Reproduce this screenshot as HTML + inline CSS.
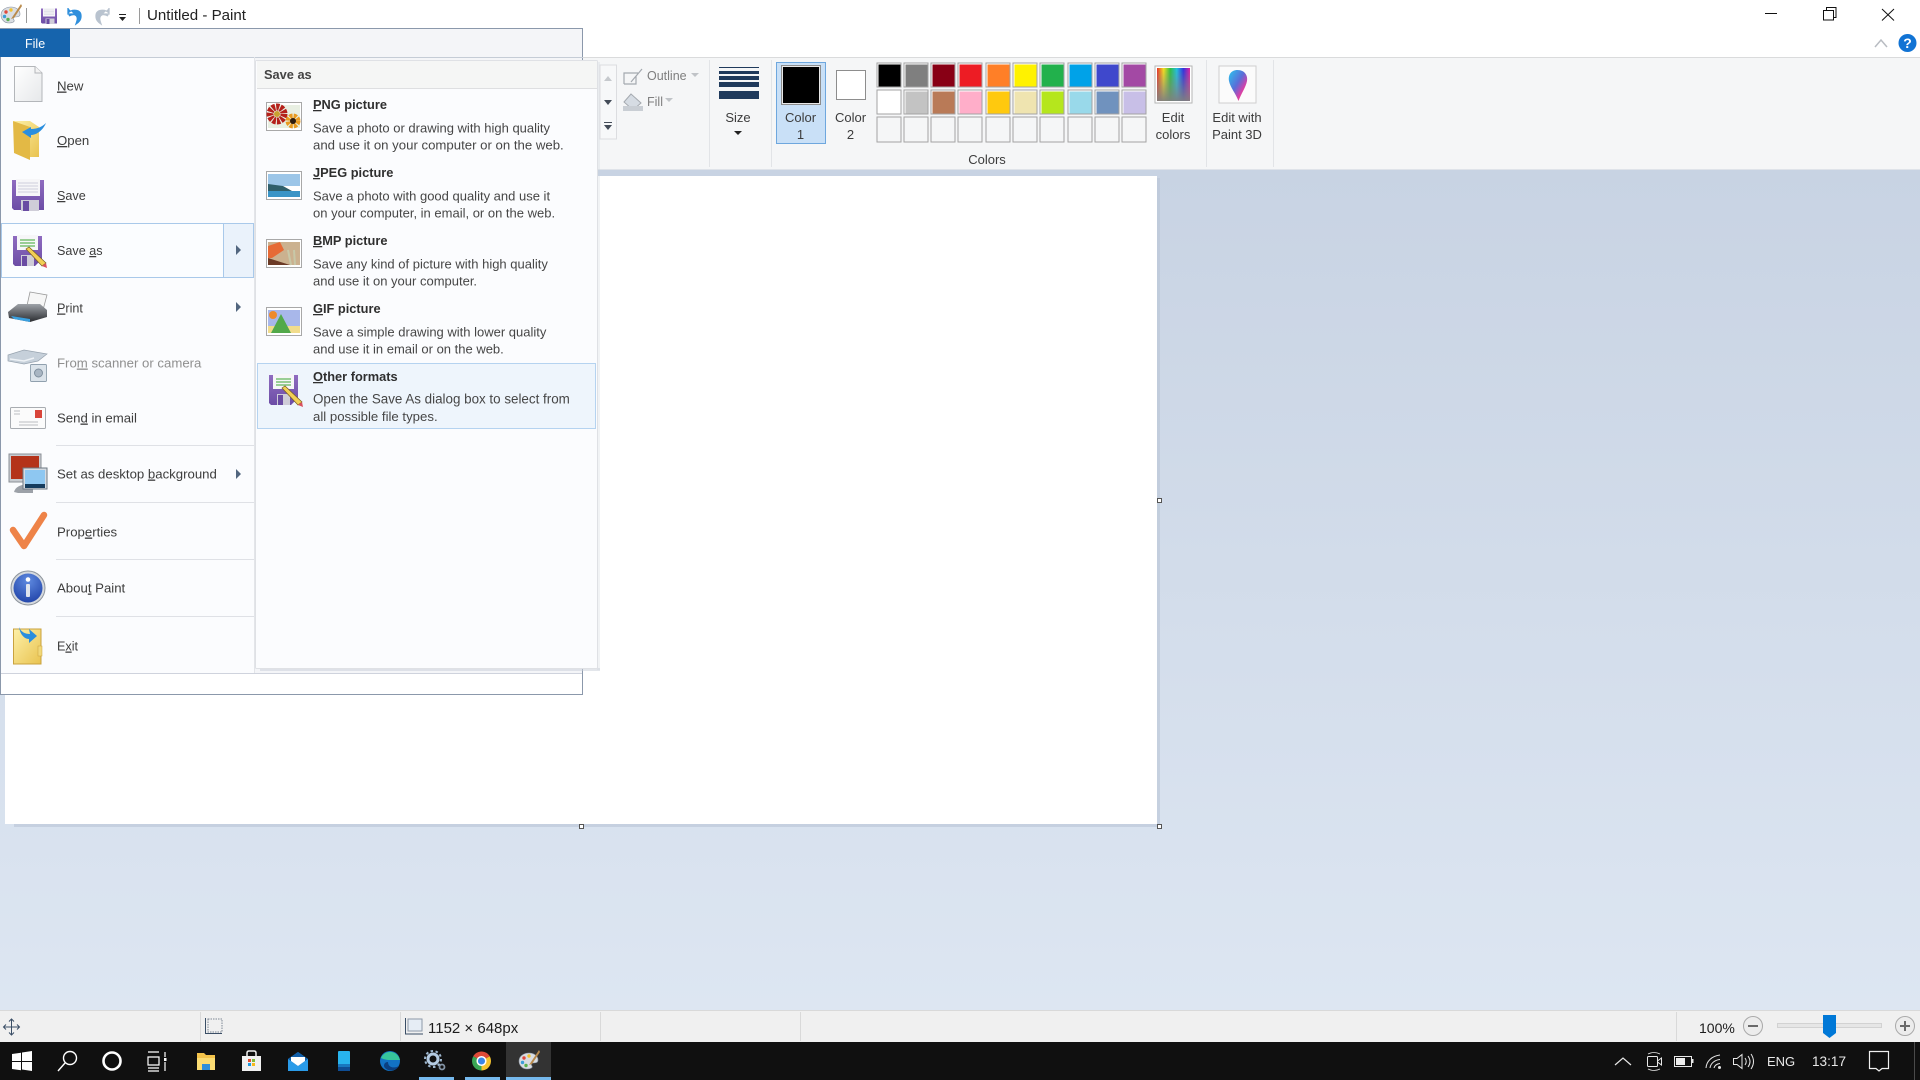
<!DOCTYPE html>
<html><head><meta charset="utf-8"><title>Untitled - Paint</title>
<style>
html,body{margin:0;padding:0;width:1920px;height:1080px;overflow:hidden;background:#fff}
svg{display:block;position:absolute;left:0;top:0}
text{font-family:"Liberation Sans",Arial,sans-serif;font-size:13.2px;fill:#3d3d3d;white-space:pre}
.t{font-weight:bold;font-size:12.800px;fill:#2f2f2f}
.d{fill:#464646}
.r{font-size:13px;text-anchor:middle;fill:#3c3c3c}
.g{fill:#7f7f7f;font-size:12.500px}
</style></head><body>
<svg width="1920" height="1080" viewBox="0 0 1920 1080" xmlns="http://www.w3.org/2000/svg">
<defs>
<linearGradient id="bg" x1="0" y1="0" x2="0" y2="1"><stop offset="0" stop-color="#c8d3e3"/><stop offset="1" stop-color="#dde6f2"/></linearGradient>
<linearGradient id="rb" x1="0" y1="0" x2="1" y2="0"><stop offset="0" stop-color="#e8302a"/><stop offset=".2" stop-color="#f5e020"/><stop offset=".4" stop-color="#30c040"/><stop offset=".6" stop-color="#20c0e0"/><stop offset=".8" stop-color="#3030e0"/><stop offset="1" stop-color="#e020a0"/></linearGradient>
<linearGradient id="gy" x1="0" y1="0" x2="0" y2="1"><stop offset="0" stop-color="#888" stop-opacity="0"/><stop offset="1" stop-color="#808080" stop-opacity=".95"/></linearGradient>
<linearGradient id="p3" x1="0" y1="0" x2="1" y2="1"><stop offset="0" stop-color="#2ac4ee"/><stop offset=".45" stop-color="#5a6ed8"/><stop offset=".7" stop-color="#d840a8"/><stop offset="1" stop-color="#f07030"/></linearGradient>
<linearGradient id="fo" x1="0" y1="0" x2="1" y2="1"><stop offset="0" stop-color="#fdf0a8"/><stop offset="1" stop-color="#e9c350"/></linearGradient>
<linearGradient id="pg" x1="0" y1="0" x2="1" y2="1"><stop offset="0" stop-color="#ffffff"/><stop offset="1" stop-color="#e6e8ea"/></linearGradient>
<radialGradient id="inf" cx=".5" cy=".25" r=".85"><stop offset="0" stop-color="#5f8ae0"/><stop offset="1" stop-color="#1c3ea4"/></radialGradient>
<linearGradient id="fp" x1="0" y1="0" x2="0" y2="1"><stop offset="0" stop-color="#8f6cc0"/><stop offset="1" stop-color="#6c4da6"/></linearGradient>
<linearGradient id="pr" x1="0" y1="0" x2="0" y2="1"><stop offset="0" stop-color="#9ea2a8"/><stop offset="1" stop-color="#2a2c30"/></linearGradient>
<g id="fl"><path d="M0 1H32V31H2L0 29Z" fill="url(#fp)"/><rect x="4" y="0" width="24" height="17" fill="#f6f6f8"/><path d="M6 4H26M6 7H26M6 10H26M6 13H26" stroke="#cfcfdb" stroke-width="1"/><rect x="9" y="21" width="18" height="11" fill="#cfcdd8"/><rect x="11" y="22" width="6" height="10" fill="#6a4ca3"/></g>
<g id="flp"><path d="M0 1H29V24L22 31H2L0 29Z" fill="url(#fp)"/><rect x="4" y="0" width="21" height="15" fill="#f6f6f8"/><path d="M7 5H22M7 8H22M7 11H22" stroke="#62b75a" stroke-width="1.200"/><rect x="8" y="20" width="13" height="11" fill="#cfcdd8"/><rect x="9" y="21" width="5" height="10" fill="#6a4ca3"/><path d="M13 14L16 12L33 28L29 31Z" fill="#f2cf55" stroke="#7a6020" stroke-width=".7"/><path d="M29 31L33 28L34 33Z" fill="#d9505e"/></g>
<g id="pal"><path d="M1 11C1 6 6 3 11 3C16 3 20 6 20 10C20 13 17 13 15 13C13 13 13 15 14 16C15 18 12 19 9 19C4 19 1 15 1 11Z" fill="#d9dde2" stroke="#8a93a0" stroke-width=".6"/><circle cx="6" cy="8" r="1.700" fill="#e0483c"/><circle cx="11" cy="6" r="1.700" fill="#f1c232"/><circle cx="4.500" cy="12.500" r="1.700" fill="#3b9ed9"/><circle cx="8" cy="15.500" r="1.700" fill="#58b04e"/><path d="M21 0L13 12L11 15L14 14L22 2Z" fill="#b98a4c"/></g>
</defs>

<!-- ribbon & background -->
<rect x="0" y="57" width="1920" height="113" fill="#f5f6f7"/>
<rect x="0" y="57" width="1920" height="1" fill="#dadbdc"/>
<rect x="0" y="170" width="1920" height="840" fill="url(#bg)"/>
<rect x="0" y="169" width="1920" height="1" fill="#dfe3e9"/>

<!-- canvas -->
<rect x="14" y="824" width="1147" height="3" fill="#b9c5d6" opacity=".6"/>
<rect x="1157" y="178" width="3" height="649" fill="#b9c5d6" opacity=".6"/>
<rect x="5" y="176" width="1152" height="648" fill="#fff"/>
<g fill="#fff" stroke="#555" stroke-width="1"><rect x="1157.500" y="498.500" width="4" height="4"/><rect x="579.500" y="824.500" width="4" height="4"/><rect x="1157.500" y="824.500" width="4" height="4"/></g>

<!-- title bar -->
<use href="#pal" transform="translate(0,4)"/>
<rect x="26" y="8" width="1" height="15" fill="#9a9a9a"/>
<g transform="translate(41,8) scale(.5)"><use href="#fl"/></g>
<path d="M68 8V14H74M68 13C72 9 81 9 81 16C81 20 79 22 76 24C77 21 78 19 77 17C76 14 72 14 69 16" fill="#2f8fdc" stroke="#2f8fdc" stroke-width="1.300"/>
<path d="M109 8V14H103M109 13C105 9 96 9 96 16C96 20 98 22 101 24C100 21 99 19 100 17C101 14 105 14 108 16" fill="#b9c3cf" stroke="#b9c3cf" stroke-width="1.300"/>
<path d="M119 14H126V15H119ZM119 17H126L122.500 21Z" fill="#222"/>
<rect x="139" y="8" width="1" height="16" fill="#9a9a9a"/>
<text x="147" y="20" style="font-size:15.100px;fill:#222">Untitled - Paint</text>
<rect x="1765" y="13" width="12" height="1" fill="#111"/>
<path d="M1823.500 10.500H1833.500V20H1823.500ZM1826.500 10V7.500H1836V17.500H1834" fill="none" stroke="#111" stroke-width="1"/>
<path d="M1882 9L1894 20.500M1894 9L1882 20.500" stroke="#111" stroke-width="1" fill="none"/>
<path d="M1875 47L1881 40L1887 47" fill="none" stroke="#b8bcc2" stroke-width="1.500"/>
<circle cx="1907.500" cy="43" r="9" fill="#1173d4"/><text x="1907.500" y="48" style="font-size:14px;font-weight:bold;fill:#fff;text-anchor:middle">?</text>

<!-- ribbon left rest -->
<rect x="600" y="65" width="16.500" height="74" fill="#f7f8f9" stroke="#dcdde0"/>
<path d="M604 81L608 76L612 81Z" fill="#c6c9cd"/><path d="M604 100L608 105L612 100Z" fill="#444c58"/><path d="M604 122H612V123H604ZM604 125H612L608 130Z" fill="#444c58"/>
<path d="M624 84V73H638M624 84H636V76M631 82L642 69" fill="none" stroke="#a4a9af" stroke-width="1.200"/>
<text x="647" y="80" class="g">Outline</text><path d="M691 73H699L695 77Z" fill="#c0c3c7"/>
<path d="M631 94L641 103L633 110L624 102Z" fill="#d6dce3" stroke="#a4a9af"/><rect x="623" y="106" width="20" height="5" fill="#c9ced4"/>
<text x="647" y="106" class="g">Fill</text><path d="M665 98H673L669 102Z" fill="#c0c3c7"/>
<rect x="709" y="60" width="1" height="107" fill="#e2e4e7"/>
<g fill="#1f3a5c"><rect x="719" y="67" width="40" height="1"/><rect x="719" y="71" width="40" height="3"/><rect x="719" y="76" width="40" height="4"/><rect x="719" y="82" width="40" height="5"/><rect x="719" y="91" width="40" height="8"/></g>
<text x="738" y="122" class="r">Size</text><path d="M734 131H742L738 135Z" fill="#222"/>
<rect x="771" y="60" width="1" height="107" fill="#e2e4e7"/>

<!-- color 1 / 2 -->
<rect x="776.500" y="62.500" width="49" height="81" fill="#c9e0f7" stroke="#6ea7de"/>
<rect x="781.500" y="65.500" width="39" height="39" fill="#e8e8e8" stroke="#8d8d8d"/>
<rect x="783" y="67" width="36" height="36" fill="#000"/>
<text x="800.500" y="122" class="r">Color</text><text x="800.500" y="139" class="r">1</text>
<rect x="836.500" y="70.500" width="29" height="29" fill="#fff" stroke="#8d8d8d"/>
<text x="850.500" y="122" class="r">Color</text><text x="850.500" y="139" class="r">2</text>

<!-- palette -->
<g transform="translate(-.5,-.5)">
<g stroke="#a3a3a3" fill="#fff">
<rect x="877.500" y="63.500" width="24" height="24"/><rect x="904.500" y="63.500" width="24" height="24"/><rect x="931.500" y="63.500" width="24" height="24"/><rect x="958.500" y="63.500" width="24" height="24"/><rect x="986.500" y="63.500" width="24" height="24"/><rect x="1013.500" y="63.500" width="24" height="24"/><rect x="1040.500" y="63.500" width="24" height="24"/><rect x="1068.500" y="63.500" width="24" height="24"/><rect x="1095.500" y="63.500" width="24" height="24"/><rect x="1122.500" y="63.500" width="24" height="24"/>
<rect x="877.500" y="90.500" width="24" height="24"/><rect x="904.500" y="90.500" width="24" height="24"/><rect x="931.500" y="90.500" width="24" height="24"/><rect x="958.500" y="90.500" width="24" height="24"/><rect x="986.500" y="90.500" width="24" height="24"/><rect x="1013.500" y="90.500" width="24" height="24"/><rect x="1040.500" y="90.500" width="24" height="24"/><rect x="1068.500" y="90.500" width="24" height="24"/><rect x="1095.500" y="90.500" width="24" height="24"/><rect x="1122.500" y="90.500" width="24" height="24"/>
</g>
<g stroke="#a3a3a3" fill="#f5f6f7">
<rect x="877.500" y="117.500" width="24" height="25"/><rect x="904.500" y="117.500" width="24" height="25"/><rect x="931.500" y="117.500" width="24" height="25"/><rect x="958.500" y="117.500" width="24" height="25"/><rect x="986.500" y="117.500" width="24" height="25"/><rect x="1013.500" y="117.500" width="24" height="25"/><rect x="1040.500" y="117.500" width="24" height="25"/><rect x="1068.500" y="117.500" width="24" height="25"/><rect x="1095.500" y="117.500" width="24" height="25"/><rect x="1122.500" y="117.500" width="24" height="25"/>
</g>
<rect x="879" y="65" width="22" height="22" fill="#000"/><rect x="906" y="65" width="22" height="22" fill="#7f7f7f"/><rect x="933" y="65" width="22" height="22" fill="#880015"/><rect x="960" y="65" width="22" height="22" fill="#ed1c24"/><rect x="988" y="65" width="22" height="22" fill="#ff7f27"/><rect x="1015" y="65" width="22" height="22" fill="#fff200"/><rect x="1042" y="65" width="22" height="22" fill="#22b14c"/><rect x="1070" y="65" width="22" height="22" fill="#00a2e8"/><rect x="1097" y="65" width="22" height="22" fill="#3f48cc"/><rect x="1124" y="65" width="22" height="22" fill="#a349a4"/>
<rect x="879" y="92" width="22" height="22" fill="#fff"/><rect x="906" y="92" width="22" height="22" fill="#c3c3c3"/><rect x="933" y="92" width="22" height="22" fill="#b97a57"/><rect x="960" y="92" width="22" height="22" fill="#ffaec9"/><rect x="988" y="92" width="22" height="22" fill="#ffc90e"/><rect x="1015" y="92" width="22" height="22" fill="#efe4b0"/><rect x="1042" y="92" width="22" height="22" fill="#b5e61d"/><rect x="1070" y="92" width="22" height="22" fill="#99d9ea"/><rect x="1097" y="92" width="22" height="22" fill="#7092be"/><rect x="1124" y="92" width="22" height="22" fill="#c8bfe7"/>
</g>
<text x="987" y="164" class="r">Colors</text>

<!-- edit colors -->
<rect x="1155" y="66" width="37" height="37" fill="#fff" stroke="#b5b5b5"/>
<rect x="1157" y="68" width="33" height="33" fill="url(#rb)"/><rect x="1157" y="68" width="33" height="33" fill="url(#gy)"/>
<text x="1173" y="122" class="r">Edit</text><text x="1173" y="139" class="r">colors</text>
<rect x="1206" y="60" width="1" height="107" fill="#e2e4e7"/>
<rect x="1219" y="66" width="37" height="37" fill="#fbfbfb" stroke="#cfcfcf"/>
<path d="M1237.500 70C1245 70 1248 76 1247 81C1246 87 1241 94 1238.500 101C1236 94 1230 87 1229 81C1228 75 1231 70 1237.500 70Z" fill="url(#p3)"/>
<text x="1237" y="122" class="r">Edit with</text><text x="1237" y="139" class="r">Paint 3D</text>
<rect x="1273" y="60" width="1" height="107" fill="#e2e4e7"/>

<!-- file menu window -->
<rect x="0.500" y="28.500" width="582" height="666" fill="#f4f5f8" stroke="#8b98ab"/>
<rect x="1" y="673" width="581" height="21" fill="#fff"/>
<rect x="1" y="673" width="581" height="1" fill="#cfd3dd"/>
<rect x="0" y="29" width="70" height="28" fill="#1664ad"/>
<text x="25" y="48" style="fill:#fff;font-size:12.500px">File</text>
<rect x="1" y="57" width="254" height="616" fill="#fbfcfe"/>
<rect x="70" y="57" width="513" height="1" fill="#c5ccd6"/>
<rect x="254" y="57" width="1" height="616" fill="#e3e5e9"/>

<!-- highlighted save as -->
<rect x="1.500" y="223.500" width="222" height="54" fill="#fbfdff" stroke="#a9c9ea"/>
<rect x="223.500" y="223.500" width="30" height="54" fill="#eaf2fb" stroke="#a9c9ea"/>
<path d="M236 245L241 250L236 255Z" fill="#52667f"/><path d="M236 302L241 307L236 312Z" fill="#52667f"/><path d="M236 469L241 474L236 479Z" fill="#52667f"/>
<g fill="#dfe1e6"><rect x="56" y="445" width="198" height="1"/><rect x="56" y="502" width="198" height="1"/><rect x="56" y="559" width="198" height="1"/><rect x="56" y="616" width="198" height="1"/></g>

<!-- left menu text -->
<text x="57" y="90.500"><tspan text-decoration="underline">N</tspan>ew</text>
<text x="57" y="145"><tspan text-decoration="underline">O</tspan>pen</text>
<text x="57" y="200" style="font-size:12.600px"><tspan text-decoration="underline">S</tspan>ave</text>
<text x="57" y="255" style="font-size:12.600px">Save <tspan text-decoration="underline">a</tspan>s</text>
<text x="57" y="312.500" style="font-size:12.600px"><tspan text-decoration="underline">P</tspan>rint</text>
<text x="57" y="367.500" style="fill:#8f8f8f">Fro<tspan text-decoration="underline">m</tspan> scanner or camera</text>
<text x="57" y="422.500">Sen<tspan text-decoration="underline">d</tspan> in email</text>
<text x="57" y="478.500">Set as desktop <tspan text-decoration="underline">b</tspan>ackground</text>
<text x="57" y="536.500">Prop<tspan text-decoration="underline">e</tspan>rties</text>
<text x="57" y="592.500">Abou<tspan text-decoration="underline">t</tspan> Paint</text>
<text x="57" y="650.500" style="font-size:12.600px">E<tspan text-decoration="underline">x</tspan>it</text>

<!-- left menu icons -->
<path d="M14.500 66.500H35L42 73V101.500H14.500Z" fill="url(#pg)" stroke="#b3b6ba"/><path d="M35 66.500V73H42" fill="#f3f3f3" stroke="#b3b6ba"/>
<path d="M13 121L30 126V160L14 153Z" fill="#e3b945"/><path d="M13 121H30L39 127V157H30V127Z" fill="url(#fo)"/>
<path d="M31 127L22 132L31 138L31 135C37 135 43 130 46 123C42 127 37 129 31 129Z" fill="#2a8ede"/>
<g transform="translate(12,179)"><use href="#fl"/></g>
<g transform="translate(13,235)"><use href="#flp"/></g>
<path d="M30 292L47 295L43 310H26Z" fill="#f6f6f6" stroke="#9a9a9a" stroke-width=".8"/>
<path d="M8 312L18 304H40L47 310V317L30 322L9 318Z" fill="url(#pr)"/><path d="M11 316L30 319L30 322L14 319Z" fill="#3aa0e0"/>
<path d="M8 355L24 350L47 354L38 361L24 364L8 361Z" fill="#c6d0da" stroke="#97a3af" stroke-width=".7"/><path d="M10 359L24 361L34 358" fill="none" stroke="#eef2f6" stroke-width="1.500"/>
<rect x="30.500" y="364.500" width="16" height="17" rx="1" fill="#dbe3ea" stroke="#90a0ae" stroke-width=".9"/><circle cx="38.500" cy="373" r="4" fill="#a9b6c3" stroke="#7f8f9e"/>
<rect x="10.500" y="407.500" width="35" height="21" rx="1" fill="#fbfbfb" stroke="#a8acb1"/><rect x="35" y="410" width="7" height="8" fill="#d9453a"/><path d="M14 411H20M14 414H20M19 422H38M19 425H38" stroke="#a6aab0" stroke-width=".8"/>
<rect x="9" y="454" width="32" height="28" fill="#c8ccd1" stroke="#8b8f96"/><rect x="11" y="456" width="28" height="23" fill="#b4331a"/>
<path d="M14 492C16 484 28 483 33 487V493H18Z" fill="#9ca1a8"/><rect x="23" y="468" width="24" height="21" fill="#d6dbe1" stroke="#6e7883"/><rect x="25" y="470" width="20" height="14" fill="#8ec7f1"/><rect x="25" y="484" width="20" height="4" fill="#153c5e"/>
<path d="M13 530L24 546L44 515" fill="none" stroke="#ee8348" stroke-width="6.500" stroke-linecap="round" stroke-linejoin="round"/>
<circle cx="28" cy="588" r="17" fill="#d5d9de" stroke="#8d949c"/><circle cx="28" cy="588" r="14.500" fill="url(#inf)"/><circle cx="28" cy="579.500" r="2.300" fill="#fff"/><rect x="26" y="584" width="4" height="13" rx="1" fill="#dfe4ee"/>
<path d="M13.500 629H41V664H13.500Z" fill="url(#fo)" stroke="#c9a23f"/><rect x="38" y="646" width="4" height="10" fill="#f1d878" stroke="#c9a23f" stroke-width=".5"/>
<path d="M19 627C21 632 25 634 30 634L29 629L37 636L29 643L29 639C24 639 20 634 19 627Z" fill="#2a8ede"/>

<!-- right pane -->
<rect x="260" y="668" width="340" height="3" fill="#c8ced8" opacity=".5"/>
<rect x="597" y="62" width="3" height="608" fill="#c8ced8" opacity=".25"/>
<rect x="255.500" y="60.500" width="342" height="608" rx="1" fill="#fbfcfe" stroke="#dfe1e5"/>
<rect x="257" y="61" width="340" height="27" fill="#f5f6f5"/>
<rect x="257" y="88" width="340" height="1" fill="#dedfe1"/>
<text x="264" y="79" class="t" style="fill:#444">Save as</text>

<rect x="257.500" y="363.500" width="338" height="65" fill="#eef5fc" stroke="#b5d3f0"/>

<text x="313" y="109" class="t"><tspan text-decoration="underline">P</tspan>NG picture</text>
<text x="313" y="132.500" class="d" style="font-size:13px">Save a photo or drawing with high quality</text>
<text x="313" y="149.500" class="d">and use it on your computer or on the web.</text>
<text x="313" y="177" class="t"><tspan text-decoration="underline">J</tspan>PEG picture</text>
<text x="313" y="200.500" class="d" style="font-size:13px">Save a photo with good quality and use it</text>
<text x="313" y="217.500" class="d" style="font-size:13px">on your computer, in email, or on the web.</text>
<text x="313" y="245" class="t"><tspan text-decoration="underline">B</tspan>MP picture</text>
<text x="313" y="268.500" class="d" style="font-size:13px">Save any kind of picture with high quality</text>
<text x="313" y="285.500" class="d" style="font-size:13px">and use it on your computer.</text>
<text x="313" y="313" class="t"><tspan text-decoration="underline">G</tspan>IF picture</text>
<text x="313" y="336.500" class="d" style="font-size:13px">Save a simple drawing with lower quality</text>
<text x="313" y="353.500" class="d" style="font-size:13px">and use it in email or on the web.</text>
<text x="313" y="381" class="t"><tspan text-decoration="underline">O</tspan>ther formats</text>
<text x="313" y="403.500" class="d" style="font-size:13.400px">Open the Save As dialog box to select from</text>
<text x="313" y="421" class="d">all possible file types.</text>

<!-- thumbs -->
<rect x="266.500" y="102.500" width="35" height="28" fill="#fff" stroke="#a8a8a8"/>
<rect x="268" y="105" width="32" height="23" fill="#e8efe2"/><circle cx="277" cy="114" r="7" fill="none" stroke="#b5201a" stroke-width="7" stroke-dasharray="3 1"/><circle cx="277" cy="114" r="3" fill="#c9a030"/><circle cx="293" cy="121" r="5" fill="none" stroke="#e89a20" stroke-width="5" stroke-dasharray="3 1"/><circle cx="293" cy="121" r="3" fill="#2d1d10"/>
<rect x="266.500" y="171.500" width="35" height="28" fill="#fff" stroke="#a8a8a8"/>
<rect x="268" y="174" width="32" height="12" fill="#9cc6e8"/><path d="M268 184L283 186L292 191H268Z" fill="#2f5f6b"/><rect x="268" y="191" width="32" height="6" fill="#3a94c6"/>
<rect x="266.500" y="239.500" width="35" height="28" fill="#fff" stroke="#a8a8a8"/>
<rect x="268" y="242" width="32" height="23" fill="#cbb18f"/><path d="M268 246L280 242L284 250L272 258L268 258Z" fill="#e66a35"/><path d="M268 258L290 265H268Z" fill="#6b3a26"/><path d="M288 250L291 265M294 250L295 265" stroke="#c8c8a8" stroke-width="2"/>
<rect x="266.500" y="307.500" width="35" height="28" fill="#fff" stroke="#a8a8a8"/>
<rect x="268" y="310" width="32" height="16" fill="#a8b7ea"/><rect x="268" y="326" width="32" height="7" fill="#f1dc8c"/><path d="M271 333L281 314L291 333Z" fill="#52a94a"/><circle cx="273" cy="315" r="4" fill="#ee8a2c"/>
<g transform="translate(269,374)"><use href="#flp"/></g>

<!-- status bar -->
<rect x="0" y="1010" width="1920" height="32" fill="#f0f0f0"/>
<rect x="0" y="1010" width="1920" height="1" fill="#d9d9d9"/>
<g fill="#d9d9d9"><rect x="200" y="1012" width="1" height="29"/><rect x="400" y="1012" width="1" height="29"/><rect x="600" y="1012" width="1" height="29"/><rect x="800" y="1012" width="1" height="29"/><rect x="1676" y="1012" width="1" height="29"/></g>
<path d="M11.500 1019V1035M3.500 1027H19.500M9 1021.500L11.500 1019L14 1021.500M9 1032.500L11.500 1035L14 1032.500M6 1024.500L3.500 1027L6 1029.500M17 1024.500L19.500 1027L17 1029.500" fill="none" stroke="#3a4e66" stroke-width="1"/>
<rect x="208" y="1019" width="14" height="13" fill="none" stroke="#7c8694" stroke-dasharray="1.500 1"/><path d="M205.500 1018V1033.500H222" fill="none" stroke="#3a4e66"/>
<rect x="408" y="1019" width="14" height="12" fill="#e6edf5" stroke="#8d99a8"/><path d="M405.500 1018V1034H423" fill="none" stroke="#3a4e66"/>
<text x="428" y="1033" style="font-size:15px;fill:#1c1c1c">1152 × 648px</text>
<text x="1699" y="1033" style="font-size:14px;fill:#1c1c1c">100%</text>
<circle cx="1753" cy="1026" r="9.500" fill="#ececec" stroke="#a9a9a9"/><rect x="1748" y="1025" width="10" height="2" fill="#6a6a6a"/>
<rect x="1777.500" y="1023.500" width="104" height="4" fill="#e6e6e6" stroke="#d2d2d2"/>
<path d="M1823 1015H1836V1033L1829.500 1038L1823 1033Z" fill="#0078d7"/>
<circle cx="1905" cy="1026" r="9.500" fill="#ececec" stroke="#a9a9a9"/><path d="M1900 1026H1910M1905 1021V1031" stroke="#6a6a6a" stroke-width="2"/>

<!-- taskbar -->
<rect x="0" y="1042" width="1920" height="38" fill="#101010"/>
<rect x="506" y="1042" width="45" height="38" fill="#333"/>
<g fill="#76b9ed"><rect x="419" y="1077" width="35" height="3"/><rect x="465" y="1077" width="35" height="3"/><rect x="506" y="1077" width="45" height="3"/></g>
<path d="M12 1054L21 1052.700V1061H12ZM22 1052.500L32 1051V1061H22ZM12 1062H21V1070.300L12 1069ZM22 1062H32V1071L22 1069.500Z" fill="#fff"/>
<circle cx="70" cy="1058" r="6.500" fill="none" stroke="#fff" stroke-width="1.400"/><path d="M65 1063L58 1071" stroke="#fff" stroke-width="1.400"/>
<circle cx="112" cy="1061" r="8.500" fill="none" stroke="#fff" stroke-width="2.600"/>
<path d="M148 1052H159M148 1068H159M148 1057H159V1065H148ZM165 1052V1057M165 1062V1071M148 1071H159" fill="none" stroke="#fff" stroke-width="1.200"/><rect x="164" y="1058" width="2.500" height="3" fill="#fff"/>
<path d="M197 1053H204L206 1055H215V1070H197Z" fill="#f4c34a"/><path d="M197 1058H215V1070H210V1064H202V1070H197Z" fill="#fbdc73"/><rect x="202" y="1064" width="8" height="6" fill="#2e8edb"/>
<path d="M242 1056H261V1071H242Z" fill="#f1f1f1"/><path d="M247 1056V1053Q247 1051 249 1051H254Q256 1051 256 1053V1056" fill="none" stroke="#f1f1f1" stroke-width="1.500"/><rect x="248" y="1059" width="3" height="3" fill="#e54b2e"/><rect x="252" y="1059" width="3" height="3" fill="#7fbb3c"/><rect x="248" y="1063" width="3" height="3" fill="#1f9ae0"/><rect x="252" y="1063" width="3" height="3" fill="#f6b91e"/>
<path d="M288 1059L298 1052L308 1059V1071H288Z" fill="#2a9be8"/><path d="M288 1059L298 1052L308 1059L298 1066Z" fill="#0f5da8"/><path d="M291 1057H305V1061L298 1066L291 1061Z" fill="#fff"/>
<rect x="338" y="1051" width="12" height="20" rx="1" fill="#28b4ee"/><rect x="338" y="1064" width="12" height="3" fill="#1878c0"/><rect x="338" y="1067" width="12" height="4" fill="#0e4d94"/>
<circle cx="390" cy="1061" r="10" fill="#1272c4"/><path d="M381 1058C384 1050 397 1049 400 1060L390 1060C386 1060 383 1059 381 1058Z" fill="#37c59b"/><path d="M388 1062C388 1067 393 1069 399 1066C396 1071 389 1072 385 1068C383 1066 384 1062 388 1062Z" fill="#0b3f80"/>
<circle cx="433" cy="1059" r="5" fill="none" stroke="#b4cbe2" stroke-width="3"/><circle cx="433" cy="1059" r="8" fill="none" stroke="#9fb8d0" stroke-width="2" stroke-dasharray="2.500 2.500"/><circle cx="442" cy="1067" r="2.500" fill="none" stroke="#8494a6" stroke-width="1.800"/>
<path d="M481.500 1061L473.300 1056.250A9.500 9.500 0 0 1 489.700 1056.250Z" fill="#de4a38"/><path d="M481.500 1061L473.300 1056.250A9.500 9.500 0 0 0 481.500 1070.500Z" fill="#3aa655"/><path d="M481.500 1061L489.700 1056.250A9.500 9.500 0 0 1 481.500 1070.500Z" fill="#f5c32f"/><circle cx="481.500" cy="1061" r="4.300" fill="#3a86e8" stroke="#fff" stroke-width="1.500"/>
<use href="#pal" transform="translate(518,1050)"/>
<path d="M1615 1065L1623 1058L1631 1065" fill="none" stroke="#e8e8e8" stroke-width="1.200"/>
<rect x="1647.500" y="1056.500" width="10" height="10" rx="1" fill="none" stroke="#e8e8e8"/><path d="M1657.500 1061L1661.500 1058V1065L1657.500 1062" fill="none" stroke="#e8e8e8"/>
<path d="M1648 1054Q1654 1051 1660 1054M1648 1069Q1654 1072 1660 1069" fill="none" stroke="#e8e8e8" stroke-width=".8"/>
<rect x="1674.500" y="1056.500" width="17" height="10" fill="none" stroke="#e8e8e8"/><rect x="1676" y="1058" width="9" height="7" fill="#eee"/><rect x="1692" y="1059" width="1.500" height="4" fill="#e8e8e8"/>
<path d="M1706 1068C1706.500 1061 1712 1056 1720 1055M1710 1068C1710.500 1064 1714 1060 1720 1059.500M1714 1068C1714.500 1066 1716 1064 1720 1063.500" fill="none" stroke="#e8e8e8"/><circle cx="1719.500" cy="1067.500" r="1.500" fill="#e8e8e8"/>
<path d="M1733.500 1058.500H1737L1742 1054.500V1068.500L1737 1064.500H1733.500Z" fill="none" stroke="#e8e8e8"/><path d="M1745 1058Q1747.500 1061.500 1745 1065M1748 1056Q1752 1061.500 1748 1067M1751 1054Q1756 1061.500 1751 1069" fill="none" stroke="#e8e8e8"/>
<text x="1767" y="1066" style="font-size:13px;fill:#e8e8e8">ENG</text>
<text x="1812" y="1066" style="font-size:13.600px;fill:#e8e8e8">13:17</text>
<path d="M1869.500 1051.500H1888.500V1068.500H1882L1879 1071L1876 1068.500H1869.500Z" fill="none" stroke="#f0f0f0" stroke-width="1.200"/>
<rect x="1914" y="1042" width="1" height="38" fill="#4a4a4a"/>
</svg>
</body></html>
